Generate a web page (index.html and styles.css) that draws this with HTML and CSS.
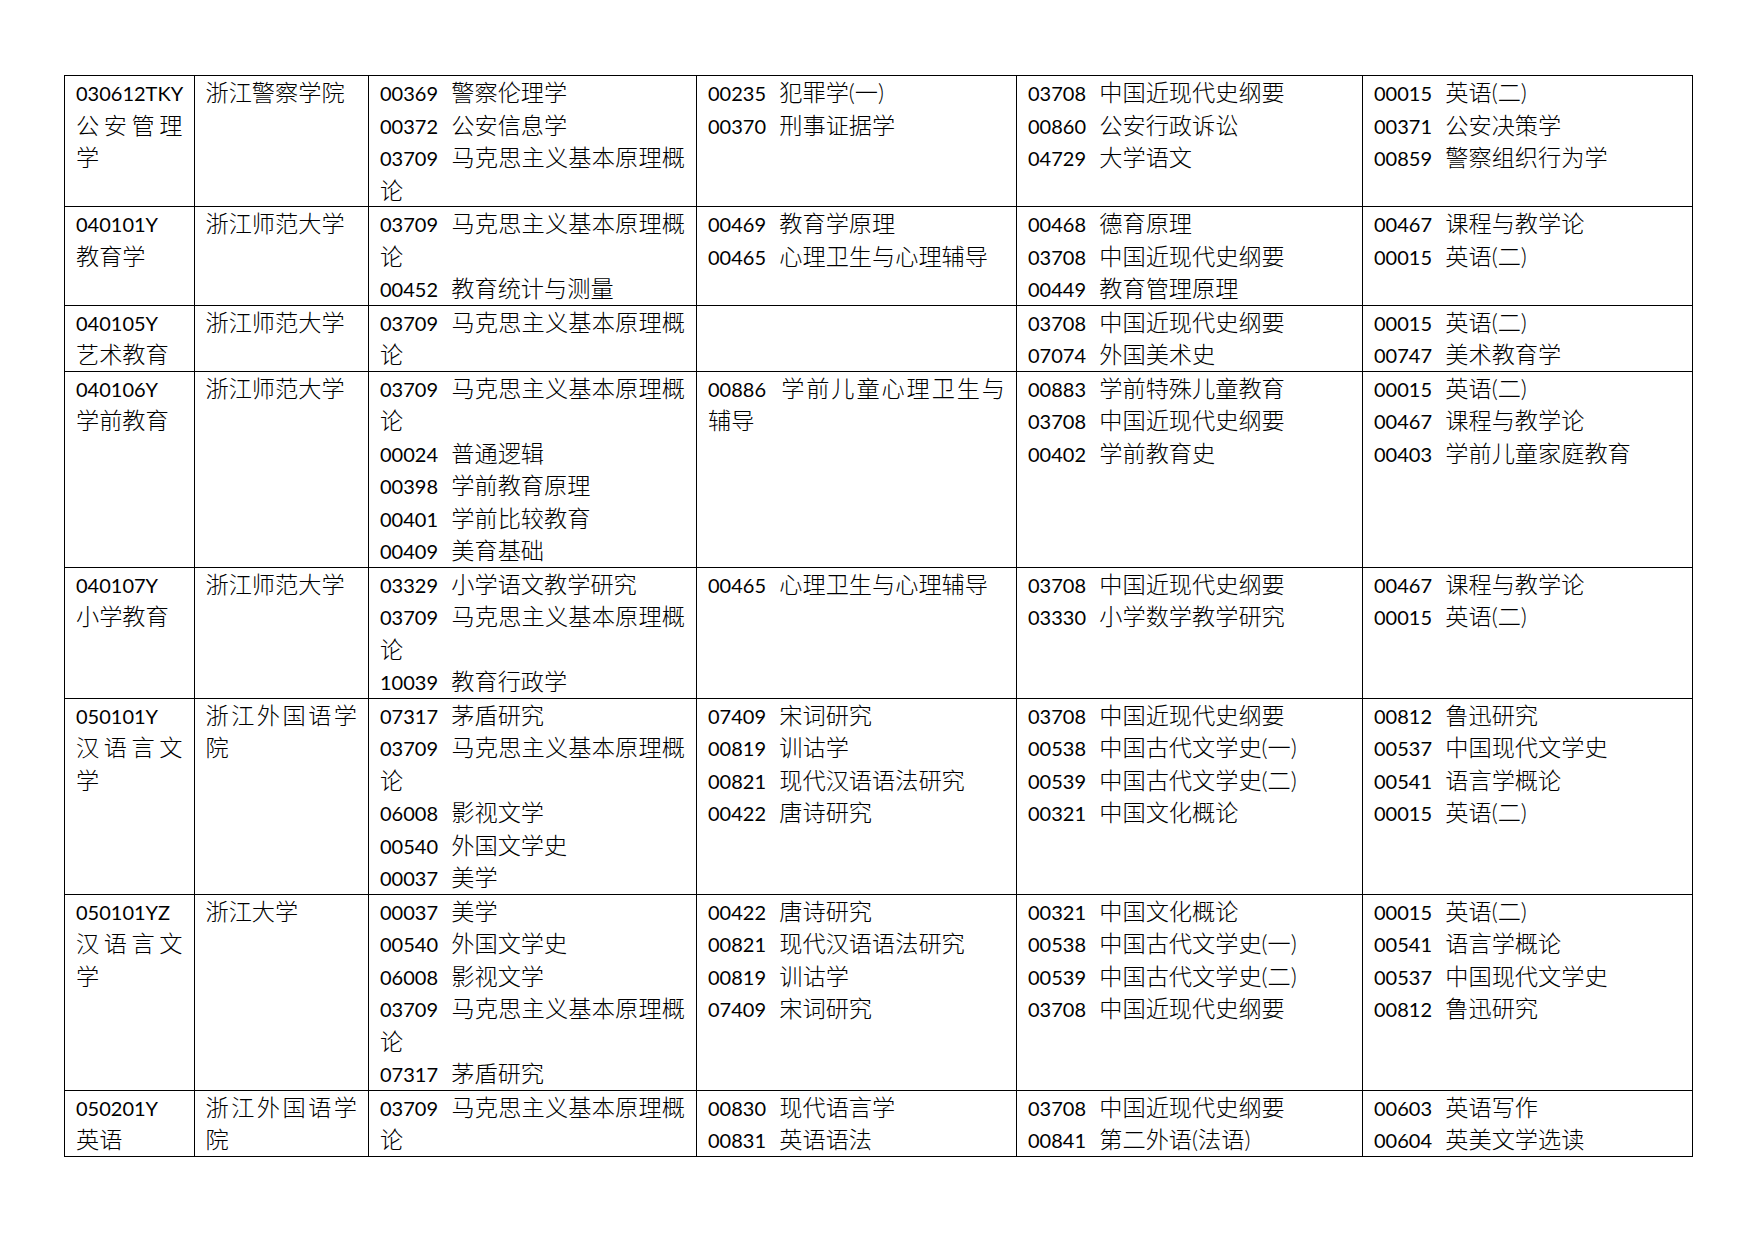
FILE: index.html
```html
<!DOCTYPE html>
<html lang="zh-CN">
<head>
<meta charset="utf-8">
<title>课程设置表</title>
<link rel="stylesheet" href="styles.css">
</head>
<body>
<div class="page">
<table class="plan">
<colgroup>
<col class="c1"><col class="c2"><col class="c3"><col class="c4"><col class="c5"><col class="c6">
</colgroup>
<tbody>
<tr>
<td><p><span class="k">030612TKY</span></p><p>公安管理学</p></td>
<td><p>浙江警察学院</p></td>
<td><p><span class="k">00369</span> 警察伦理学</p><p><span class="k">00372</span> 公安信息学</p><p><span class="k">03709</span> 马克思主义基本原理概论</p></td>
<td><p><span class="k">00235</span> 犯罪学(一)</p><p><span class="k">00370</span> 刑事证据学</p></td>
<td><p><span class="k">03708</span> 中国近现代史纲要</p><p><span class="k">00860</span> 公安行政诉讼</p><p><span class="k">04729</span> 大学语文</p></td>
<td><p><span class="k">00015</span> 英语(二)</p><p><span class="k">00371</span> 公安决策学</p><p><span class="k">00859</span> 警察组织行为学</p></td>
</tr>
<tr>
<td><p><span class="k">040101Y</span></p><p>教育学</p></td>
<td><p>浙江师范大学</p></td>
<td><p><span class="k">03709</span> 马克思主义基本原理概论</p><p><span class="k">00452</span> 教育统计与测量</p></td>
<td><p><span class="k">00469</span> 教育学原理</p><p><span class="k">00465</span> 心理卫生与心理辅导</p></td>
<td><p><span class="k">00468</span> 德育原理</p><p><span class="k">03708</span> 中国近现代史纲要</p><p><span class="k">00449</span> 教育管理原理</p></td>
<td><p><span class="k">00467</span> 课程与教学论</p><p><span class="k">00015</span> 英语(二)</p></td>
</tr>
<tr>
<td><p><span class="k">040105Y</span></p><p>艺术教育</p></td>
<td><p>浙江师范大学</p></td>
<td><p><span class="k">03709</span> 马克思主义基本原理概论</p></td>
<td></td>
<td><p><span class="k">03708</span> 中国近现代史纲要</p><p><span class="k">07074</span> 外国美术史</p></td>
<td><p><span class="k">00015</span> 英语(二)</p><p><span class="k">00747</span> 美术教育学</p></td>
</tr>
<tr>
<td><p><span class="k">040106Y</span></p><p>学前教育</p></td>
<td><p>浙江师范大学</p></td>
<td><p><span class="k">03709</span> 马克思主义基本原理概论</p><p><span class="k">00024</span> 普通逻辑</p><p><span class="k">00398</span> 学前教育原理</p><p><span class="k">00401</span> 学前比较教育</p><p><span class="k">00409</span> 美育基础</p></td>
<td><p><span class="k">00886</span> 学前儿童心理卫生与辅导</p></td>
<td><p><span class="k">00883</span> 学前特殊儿童教育</p><p><span class="k">03708</span> 中国近现代史纲要</p><p><span class="k">00402</span> 学前教育史</p></td>
<td><p><span class="k">00015</span> 英语(二)</p><p><span class="k">00467</span> 课程与教学论</p><p><span class="k">00403</span> 学前儿童家庭教育</p></td>
</tr>
<tr>
<td><p><span class="k">040107Y</span></p><p>小学教育</p></td>
<td><p>浙江师范大学</p></td>
<td><p><span class="k">03329</span> 小学语文教学研究</p><p><span class="k">03709</span> 马克思主义基本原理概论</p><p><span class="k">10039</span> 教育行政学</p></td>
<td><p><span class="k">00465</span> 心理卫生与心理辅导</p></td>
<td><p><span class="k">03708</span> 中国近现代史纲要</p><p><span class="k">03330</span> 小学数学教学研究</p></td>
<td><p><span class="k">00467</span> 课程与教学论</p><p><span class="k">00015</span> 英语(二)</p></td>
</tr>
<tr>
<td><p><span class="k">050101Y</span></p><p>汉语言文学</p></td>
<td><p>浙江外国语学院</p></td>
<td><p><span class="k">07317</span> 茅盾研究</p><p><span class="k">03709</span> 马克思主义基本原理概论</p><p><span class="k">06008</span> 影视文学</p><p><span class="k">00540</span> 外国文学史</p><p><span class="k">00037</span> 美学</p></td>
<td><p><span class="k">07409</span> 宋词研究</p><p><span class="k">00819</span> 训诂学</p><p><span class="k">00821</span> 现代汉语语法研究</p><p><span class="k">00422</span> 唐诗研究</p></td>
<td><p><span class="k">03708</span> 中国近现代史纲要</p><p><span class="k">00538</span> 中国古代文学史(一)</p><p><span class="k">00539</span> 中国古代文学史(二)</p><p><span class="k">00321</span> 中国文化概论</p></td>
<td><p><span class="k">00812</span> 鲁迅研究</p><p><span class="k">00537</span> 中国现代文学史</p><p><span class="k">00541</span> 语言学概论</p><p><span class="k">00015</span> 英语(二)</p></td>
</tr>
<tr>
<td><p><span class="k">050101YZ</span></p><p>汉语言文学</p></td>
<td><p>浙江大学</p></td>
<td><p><span class="k">00037</span> 美学</p><p><span class="k">00540</span> 外国文学史</p><p><span class="k">06008</span> 影视文学</p><p><span class="k">03709</span> 马克思主义基本原理概论</p><p><span class="k">07317</span> 茅盾研究</p></td>
<td><p><span class="k">00422</span> 唐诗研究</p><p><span class="k">00821</span> 现代汉语语法研究</p><p><span class="k">00819</span> 训诂学</p><p><span class="k">07409</span> 宋词研究</p></td>
<td><p><span class="k">00321</span> 中国文化概论</p><p><span class="k">00538</span> 中国古代文学史(一)</p><p><span class="k">00539</span> 中国古代文学史(二)</p><p><span class="k">03708</span> 中国近现代史纲要</p></td>
<td><p><span class="k">00015</span> 英语(二)</p><p><span class="k">00541</span> 语言学概论</p><p><span class="k">00537</span> 中国现代文学史</p><p><span class="k">00812</span> 鲁迅研究</p></td>
</tr>
<tr>
<td><p><span class="k">050201Y</span></p><p>英语</p></td>
<td><p>浙江外国语学院</p></td>
<td><p><span class="k">03709</span> 马克思主义基本原理概论</p></td>
<td><p><span class="k">00830</span> 现代语言学</p><p><span class="k">00831</span> 英语语法</p></td>
<td><p><span class="k">03708</span> 中国近现代史纲要</p><p><span class="k">00841</span> 第二外语(法语)</p></td>
<td><p><span class="k">00603</span> 英语写作</p><p><span class="k">00604</span> 英美文学选读</p></td>
</tr>
</tbody>
</table>
</div>
</body>
</html>
```

FILE: styles.css
```css
html, body {
  margin: 0;
  padding: 0;
  background: #fff;
}

.page {
  width: 1754px;
  height: 1241px;
  box-sizing: border-box;
  padding: 75px 0 0 64px;
}

.plan {
  border-collapse: collapse;
  table-layout: fixed;
  width: 1628px;
  color: #000;
  font-family: "Lato", "Noto Sans CJK SC", sans-serif;
  font-size: 23.2px;
  font-weight: 300;
  line-height: 32.5px;
}

.c1 { width: 129.5px; }
.c2 { width: 174.5px; }
.c3 { width: 328px; }
.c4 { width: 320px; }
.c5 { width: 346px; }
.c6 { width: 330px; }

.plan td {
  border: 1px solid #000;
  padding: 0 11px;
  vertical-align: top;
}

.plan p {
  margin: 0;
  text-align: justify;
}

.k {
  font-size: 20px;
  font-weight: 400;
  line-height: 1;
  margin-right: 7px;
}
```
